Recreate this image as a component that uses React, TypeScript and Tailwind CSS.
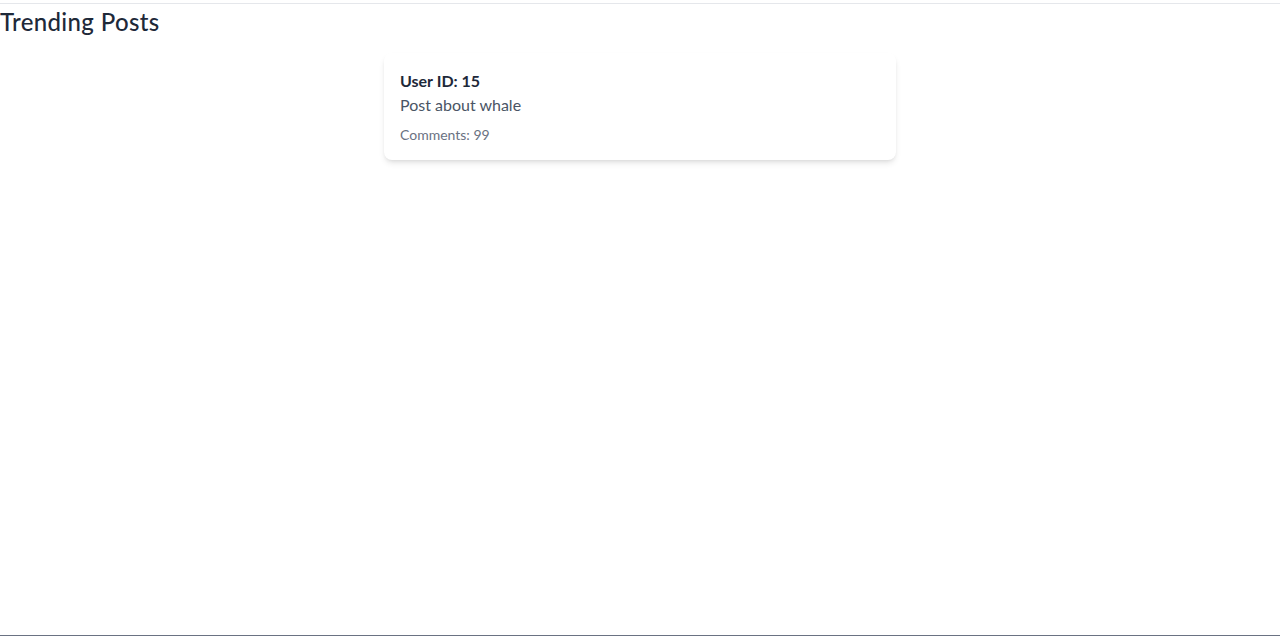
export default function App() {
  return (
    <div className="min-h-screen border-b border-gray-500 bg-white pt-[3px]" style={{ fontFamily: 'Lato, "Noto Sans", sans-serif' }}>
      <div className="border-t border-gray-200">
        <h1 className="mt-[2px] text-2xl font-medium tracking-[0.35px] text-gray-800">Trending Posts</h1>
        <div className="mx-auto mt-[15px] w-[512px] rounded-lg bg-white px-4 pt-4 pb-[15px] shadow-md">
          <div className="font-bold text-gray-800">User ID: 15</div>
          <div className="text-gray-600">Post about whale</div>
          <div className="mt-2 text-sm text-gray-500">Comments: 99</div>
        </div>
      </div>
    </div>
  );
}
